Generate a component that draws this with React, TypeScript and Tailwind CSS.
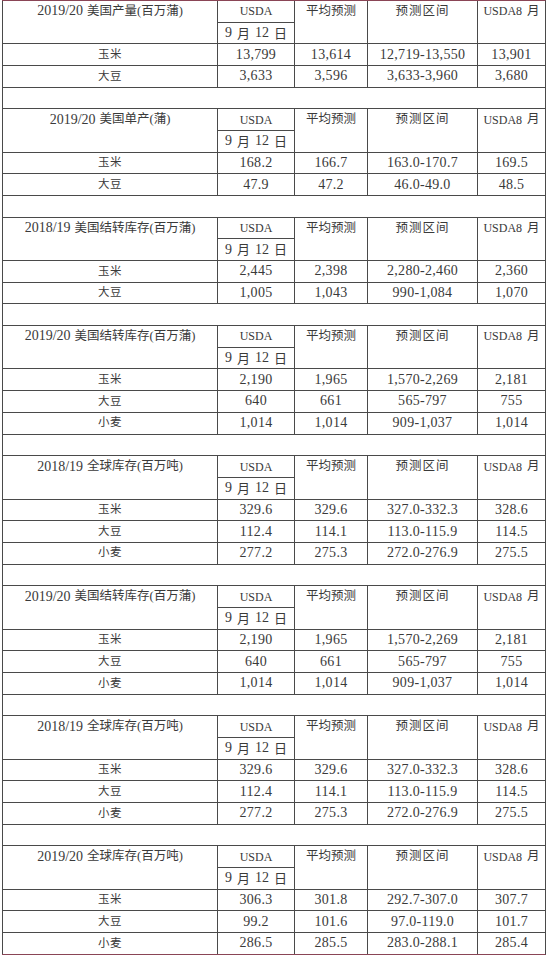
import React from "react";

type Row = [string, string, string, string, string];
type Section = { pre: string; title: string; rows: Row[] };

const S4: Section = {
  pre: "2019/20",
  title: "美国结转库存(百万蒲)",
  rows: [
    ["玉米", "2,190", "1,965", "1,570-2,269", "2,181"],
    ["大豆", "640", "661", "565-797", "755"],
    ["小麦", "1,014", "1,014", "909-1,037", "1,014"],
  ],
};
const S5: Section = {
  pre: "2018/19",
  title: "全球库存(百万吨)",
  rows: [
    ["玉米", "329.6", "329.6", "327.0-332.3", "328.6"],
    ["大豆", "112.4", "114.1", "113.0-115.9", "114.5"],
    ["小麦", "277.2", "275.3", "272.0-276.9", "275.5"],
  ],
};

const sections: Section[] = [
  {
    pre: "2019/20",
    title: "美国产量(百万蒲)",
    rows: [
      ["玉米", "13,799", "13,614", "12,719-13,550", "13,901"],
      ["大豆", "3,633", "3,596", "3,633-3,960", "3,680"],
    ],
  },
  {
    pre: "2019/20",
    title: "美国单产(蒲)",
    rows: [
      ["玉米", "168.2", "166.7", "163.0-170.7", "169.5"],
      ["大豆", "47.9", "47.2", "46.0-49.0", "48.5"],
    ],
  },
  {
    pre: "2018/19",
    title: "美国结转库存(百万蒲)",
    rows: [
      ["玉米", "2,445", "2,398", "2,280-2,460", "2,360"],
      ["大豆", "1,005", "1,043", "990-1,084", "1,070"],
    ],
  },
  S4,
  S5,
  S4,
  S5,
  {
    pre: "2019/20",
    title: "全球库存(百万吨)",
    rows: [
      ["玉米", "306.3", "301.8", "292.7-307.0", "307.7"],
      ["大豆", "99.2", "101.6", "97.0-119.0", "101.7"],
      ["小麦", "286.5", "285.5", "283.0-288.1", "285.4"],
    ],
  },
];

const widths = ["w-[215px]", "w-[77px]", "w-[73px]", "w-[110px]", "w-[68px]"];

function Header({ pre, title, first }: { pre: string; title: string; first: boolean }) {
  return (
    <div
      className={`flex h-[43.36px] border-t border-r border-[#4a4a4a] ${
        first ? "border-t-[#8a4556]" : ""
      }`}
    >
      <div className={`${widths[0]} border-l border-[#4a4a4a]`}>
        <div className="h-[20.68px] flex items-center justify-center">
          <span className="text-[14px]">{pre}</span>
          <span className="ml-[4px] text-[12.5px]">{title}</span>
        </div>
      </div>
      <div className={`${widths[1]} border-l border-[#4a4a4a] flex flex-col`}>
        <div className="h-[20.68px] flex items-center justify-center text-[12px]">USDA</div>
        <div className="flex-1 border-t border-[#4a4a4a] flex items-center justify-center text-[13px]">
          <span className="text-[14px]">9</span>
          <span className="ml-[5px]">月</span>
          <span className="ml-[5px] text-[14px]">12</span>
          <span className="ml-[5px]">日</span>
        </div>
      </div>
      <div className={`${widths[2]} border-l border-[#4a4a4a]`}>
        <div className="h-[20.68px] flex items-center justify-center text-[12.5px]">平均预测</div>
      </div>
      <div className={`${widths[3]} border-l border-[#4a4a4a]`}>
        <div className="h-[20.68px] flex items-center justify-center text-[12.5px] tracking-[1px]">
          预测区间
        </div>
      </div>
      <div className={`${widths[4]} border-l border-[#4a4a4a]`}>
        <div className="h-[20.68px] flex items-center justify-center">
          <span className="text-[12px]">USDA8</span>
          <span className="ml-[5px] text-[12.5px]">月</span>
        </div>
      </div>
    </div>
  );
}

function DataRow({ row, last }: { row: Row; last: boolean }) {
  return (
    <div
      className={`flex h-[21.68px] border-t border-r border-[#4a4a4a] ${
        last ? "h-[22.68px] border-b border-b-[#8a4556]" : ""
      }`}
    >
      {row.map((c, i) => (
        <div
          key={i}
          className={`${widths[i]} border-l border-[#4a4a4a] flex items-center justify-center ${
            i === 0 ? "text-[11.5px] tracking-[0.5px]" : "text-[14px] tracking-[0.3px]"
          }`}
        >
          {c}
        </div>
      ))}
    </div>
  );
}

export default function App() {
  return (
    <div className="w-[550px] h-[957px] bg-white overflow-hidden">
      <div className="ml-[2px] w-[544px] flex flex-col leading-none text-[#3a3a3a] font-[Liberation_Serif,Noto_Sans_CJK_SC,serif]">
        {sections.map((s, si) => {
          const isLast = si === sections.length - 1;
          return (
            <React.Fragment key={si}>
              <Header pre={s.pre} title={s.title} first={si === 0} />
              {s.rows.map((r, ri) => (
                <DataRow key={ri} row={r} last={isLast && ri === s.rows.length - 1} />
              ))}
              {!isLast && (
                <div className="h-[21.68px] border-t border-l border-r border-[#4a4a4a]" />
              )}
            </React.Fragment>
          );
        })}
      </div>
    </div>
  );
}
